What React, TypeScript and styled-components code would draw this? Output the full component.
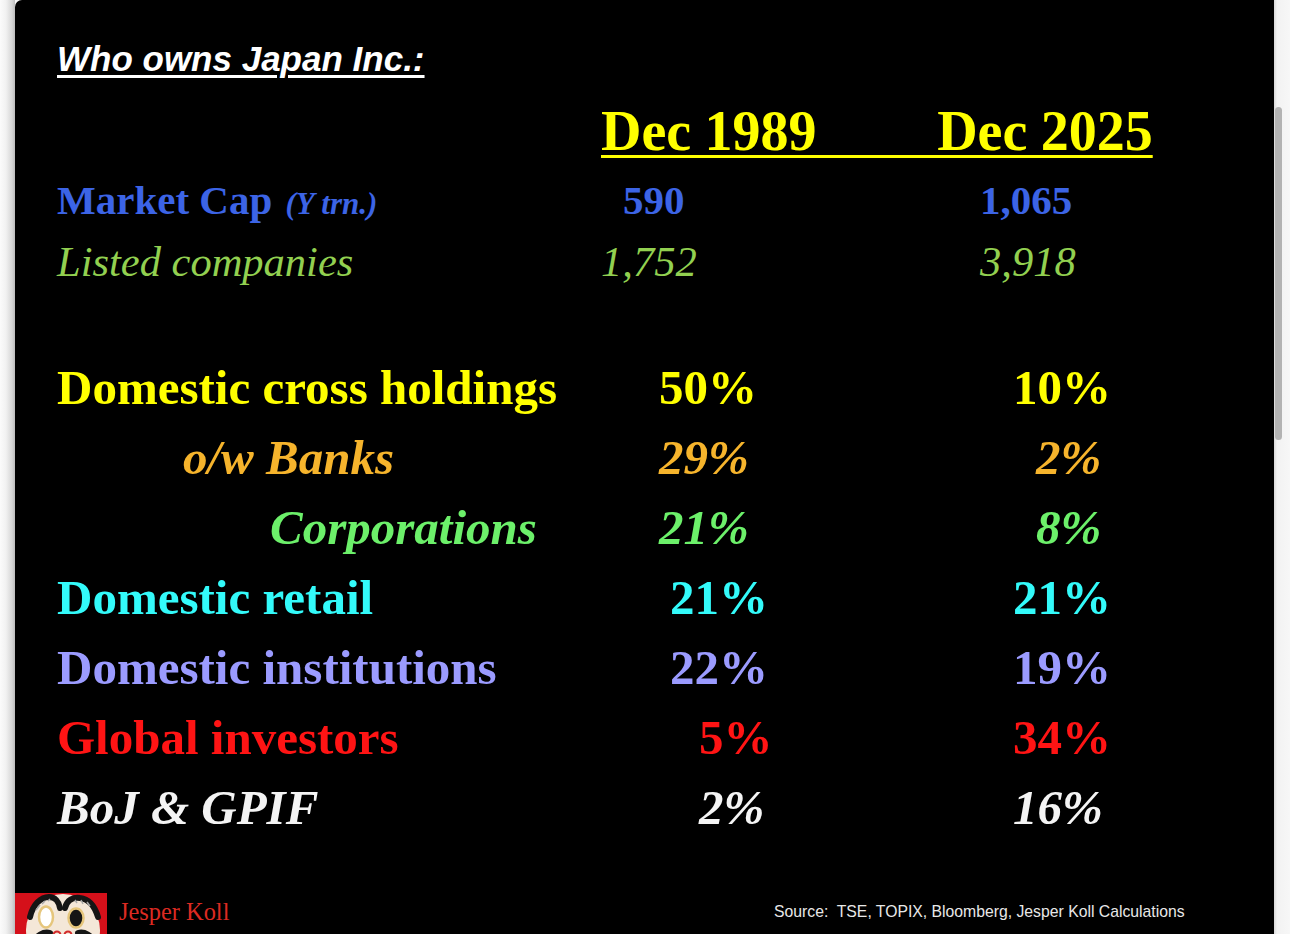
import styled, { createGlobalStyle } from "styled-components";

const GlobalStyle = createGlobalStyle`
  html, body {
    margin: 0;
    padding: 0;
    background: #f6f6f6;
    overflow: hidden;
  }
`;

const serif = `"Liberation Serif", "Times New Roman", serif`;
const sans = `"Liberation Sans", Arial, sans-serif`;

type Cell = {
  text: string;
  pad: number;
};

type Holding = {
  label: string;
  color: string;
  italic?: boolean;
  indent?: number;
  y1989: Cell;
  y2025: Cell;
};

const holdings: Holding[] = [
  {
    label: "Domestic cross holdings",
    color: "#ffff00",
    y1989: { text: "50%", pad: 58 },
    y2025: { text: "10%", pad: 75 },
  },
  {
    label: "o/w Banks",
    color: "#f6b42c",
    italic: true,
    indent: 126,
    y1989: { text: "29%", pad: 58 },
    y2025: { text: "2%", pad: 98 },
  },
  {
    label: "Corporations",
    color: "#6cf06a",
    italic: true,
    indent: 213,
    y1989: { text: "21%", pad: 58 },
    y2025: { text: "8%", pad: 98 },
  },
  {
    label: "Domestic retail",
    color: "#33fafa",
    y1989: { text: "21%", pad: 69 },
    y2025: { text: "21%", pad: 75 },
  },
  {
    label: "Domestic institutions",
    color: "#9b9bff",
    y1989: { text: "22%", pad: 69 },
    y2025: { text: "19%", pad: 75 },
  },
  {
    label: "Global investors",
    color: "#ff1414",
    y1989: { text: "5%", pad: 98 },
    y2025: { text: "34%", pad: 75 },
  },
  {
    label: "BoJ & GPIF",
    color: "#f4f4f4",
    italic: true,
    y1989: { text: "2%", pad: 98 },
    y2025: { text: "16%", pad: 75 },
  },
];

// daruma doll logo, cropped by the bottom of the page like in the slide
const Daruma = () => (
  <svg width="92" height="60" viewBox="0 0 92 60">
    <rect x="0" y="0" width="92" height="60" fill="#d5101a" />
    <ellipse cx="48" cy="37" rx="37" ry="36" fill="#f4e7d8" />
    <path d="M15 24 C18 11 26 4 34 4 C40 4 44 9 45 15" fill="none" stroke="#151515" strokeWidth="6" strokeLinecap="round" />
    <path d="M50 15 C52 7 58 4 65 5 C74 6 80 14 83 24" fill="none" stroke="#151515" strokeWidth="6" strokeLinecap="round" />
    <path d="M21 17 L25 12 M27 11 L30 8 M33 8 L35 6 M60 7 L62 10 M66 7 L68 11 M72 9 L75 13" stroke="#a8a8a8" strokeWidth="1.5" />
    <ellipse cx="31" cy="24" rx="7" ry="10.5" fill="#ffffff" stroke="#e6c67c" strokeWidth="2.5" />
    <ellipse cx="61" cy="25" rx="7.5" ry="9.5" fill="#151515" stroke="#e6c67c" strokeWidth="2.5" />
    <path d="M17 52 C21 42 29 38 35 40" fill="none" stroke="#151515" strokeWidth="6" strokeLinecap="round" />
    <path d="M81 52 C77 42 69 38 63 40" fill="none" stroke="#151515" strokeWidth="6" strokeLinecap="round" />
    <circle cx="42" cy="42" r="3.5" fill="none" stroke="#d22a2a" strokeWidth="2" />
    <circle cx="53" cy="42" r="3.5" fill="none" stroke="#d22a2a" strokeWidth="2" />
  </svg>
);

const App = () => {
  return (
    <>
      <GlobalStyle />
      <Page>
        <LeftEdge />
        <Slide>
          <Content>
            <Title>Who owns Japan Inc.:</Title>

            <HeaderRow>
              <span />
              <YearHeads>{"Dec 1989         Dec 2025"}</YearHeads>
            </HeaderRow>

            <Row $h={62}>
              <Label $color="#3c64e6" $size={41}>
                Market Cap <Unit>(Y trn.)</Unit>
              </Label>
              <Value $color="#3c64e6" $size={41} $pad={22}>
                590
              </Value>
              <Value $color="#3c64e6" $size={41} $pad={42}>
                1,065
              </Value>
            </Row>
            <Row $h={62}>
              <Label $color="#92d050" $size={42.5} $italic $light>
                Listed companies
              </Label>
              <Value $color="#92d050" $size={42.5} $pad={0} $italic $light>
                1,752
              </Value>
              <Value $color="#92d050" $size={42.5} $pad={42} $italic $light>
                3,918
              </Value>
            </Row>

            <Holdings>
              {holdings.map((h) => (
                <Row key={h.label} $h={70}>
                  <Label
                    $color={h.color}
                    $size={49}
                    $italic={h.italic}
                    $indent={h.indent}
                  >
                    {h.label}
                  </Label>
                  <Value
                    $color={h.color}
                    $size={49}
                    $pad={h.y1989.pad}
                    $italic={h.italic}
                  >
                    {h.y1989.text}
                  </Value>
                  <Value
                    $color={h.color}
                    $size={49}
                    $pad={h.y2025.pad}
                    $italic={h.italic}
                  >
                    {h.y2025.text}
                  </Value>
                </Row>
              ))}
            </Holdings>
          </Content>

          <Footer>
            <Daruma />
            <Author>Jesper Koll</Author>
            <Source>Source:  TSE, TOPIX, Bloomberg, Jesper Koll Calculations</Source>
          </Footer>
        </Slide>
        <Gutter>
          <Thumb />
        </Gutter>
      </Page>
    </>
  );
};
export default App;

const Page = styled.div`
  display: flex;
  width: 1290px;
  height: 934px;
  overflow: hidden;
  background: #f6f6f6;
`;

const LeftEdge = styled.div`
  width: 15px;
  flex-shrink: 0;
  background: linear-gradient(to right, #fbfbfb 0, #f1f1f1 6px, #d6d6d6 12px, #bdbdbd 15px);
`;

const Slide = styled.div`
  flex: 1;
  display: flex;
  flex-direction: column;
  background: #000;
  border-top-left-radius: 7px;
  overflow: hidden;
`;

const Content = styled.div`
  display: flex;
  flex-direction: column;
  padding: 40px 0 0 42px;
`;

const Title = styled.div`
  height: 38px;
  line-height: 38px;
  font-family: ${sans};
  font-weight: 700;
  font-style: italic;
  font-size: 35px;
  color: #fff;
  text-decoration: underline;
  text-decoration-thickness: 2.5px;
  text-underline-offset: 4px;
  white-space: nowrap;
`;

const Row = styled.div<{ $h: number }>`
  display: grid;
  grid-template-columns: 544px 337px 1fr;
  height: ${(p) => p.$h}px;
  line-height: ${(p) => p.$h}px;
  white-space: nowrap;
  font-family: ${serif};
`;

const HeaderRow = styled(Row).attrs({ $h: 50 })`
  margin-top: 28px;
  margin-bottom: 13px;
`;

const YearHeads = styled.div`
  grid-column: 2 / 4;
  white-space: pre;
  font-size: 56px;
  font-weight: 700;
  word-spacing: -0.6px;
  color: #ffff00;
  text-decoration: underline;
  text-decoration-thickness: 3px;
  text-underline-offset: 5px;
`;

const Label = styled.div<{
  $color: string;
  $size: number;
  $italic?: boolean;
  $light?: boolean;
  $indent?: number;
}>`
  padding-left: ${(p) => p.$indent ?? 0}px;
  color: ${(p) => p.$color};
  font-size: ${(p) => p.$size}px;
  font-weight: ${(p) => (p.$light ? 400 : 700)};
  font-style: ${(p) => (p.$italic ? "italic" : "normal")};
`;

const Unit = styled.span`
  font-size: 31px;
  font-style: italic;
  margin-left: 3px;
`;

const Value = styled.div<{
  $color: string;
  $size: number;
  $pad: number;
  $italic?: boolean;
  $light?: boolean;
}>`
  padding-left: ${(p) => p.$pad}px;
  color: ${(p) => p.$color};
  font-size: ${(p) => p.$size}px;
  font-weight: ${(p) => (p.$light ? 400 : 700)};
  font-style: ${(p) => (p.$italic ? "italic" : "normal")};
`;

const Holdings = styled.div`
  display: flex;
  flex-direction: column;
  margin-top: 60px;
`;

const Footer = styled.div`
  display: grid;
  grid-template-columns: 92px 667px 1fr;
  align-items: start;
  margin-top: 50px;
  height: 60px;
`;

const Author = styled.div`
  padding-left: 12px;
  line-height: 38px;
  font-family: ${serif};
  font-size: 24.4px;
  color: #dc2a22;
`;

const Source = styled.div`
  white-space: pre;
  line-height: 38px;
  font-family: ${sans};
  font-size: 15.75px;
  color: #e8e8e8;
`;

const Gutter = styled.div`
  width: 16px;
  flex-shrink: 0;
  display: flex;
  flex-direction: column;
  background: linear-gradient(to right, #d9d9d9 0, #f2f2f2 3px, #f7f7f7 100%);
`;

const Thumb = styled.div`
  margin: 107px 0 0 1px;
  width: 7px;
  height: 333px;
  border-radius: 4px;
  background: #b3b3b3;
`;
